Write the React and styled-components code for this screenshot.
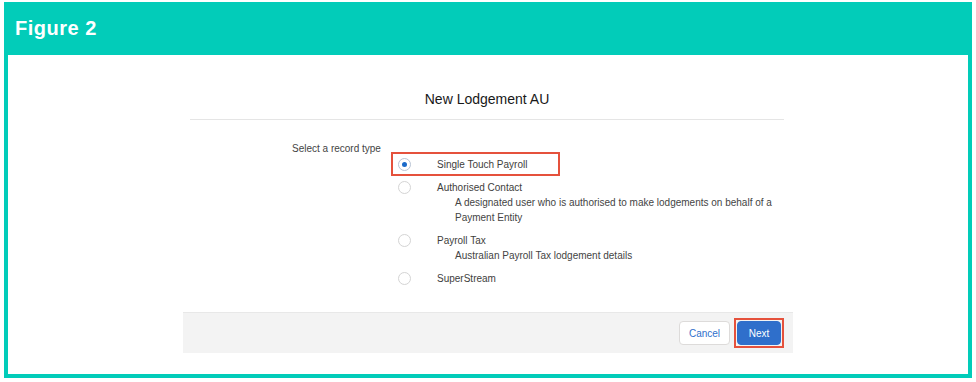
import React from "react";
import styled, { createGlobalStyle } from "styled-components";

const GlobalStyle = createGlobalStyle`
  html, body {
    margin: 0;
    padding: 0;
    background: #ffffff;
  }
  body {
    font-family: "Liberation Sans", Arial, sans-serif;
  }
`;

const Page = styled.div`
  width: 976px;
  height: 382px;
  box-sizing: border-box;
  padding: 2px 4px 4px 4px;
  background: #ffffff;
`;

const Frame = styled.div`
  height: 100%;
  box-sizing: border-box;
  background: #02ccb9;
  padding: 0 4px 4px 4px;
  display: flex;
  flex-direction: column;
`;

const Header = styled.div`
  height: 53px;
  display: flex;
  align-items: center;
  padding-left: 7px;
  color: #ffffff;
  font-family: "Liberation Sans", Arial, sans-serif;
  font-weight: 700;
  font-size: 20px;
  letter-spacing: 0.5px;
`;

const Content = styled.div`
  flex: 1;
  background: #ffffff;
  display: flex;
  justify-content: center;
`;

const Modal = styled.div`
  width: 610px;
  display: flex;
  flex-direction: column;
`;

const Title = styled.h2`
  margin: 0 9px 0 7px;
  padding-top: 34px;
  padding-bottom: 10px;
  border-bottom: 1px solid #e5e5e5;
  text-align: center;
  font-size: 14px;
  line-height: 20px;
  font-weight: 400;
  color: #181818;
`;

const Body = styled.div`
  flex: 1;
  display: flex;
  padding: 21px 0 0 109px;
  font-size: 10px;
  line-height: 15px;
  color: #444444;
`;

const FieldLabel = styled.div`
  width: 106px;
`;

const Options = styled.div`
  display: flex;
  flex-direction: column;
  gap: 8px;
  padding-top: 16px;
`;

const Option = styled.div`
  position: relative;
  display: grid;
  grid-template-columns: 13px 1fr;
  column-gap: 26px;
  align-items: start;

  ${(p) =>
    p.$marked &&
    `
    &::after {
      content: "";
      position: absolute;
      left: -7px;
      top: -5px;
      width: 165px;
      height: 20px;
      border: 2px solid #e5513c;
    }
  `}
`;

const Radio = styled.span`
  width: 13px;
  height: 13px;
  margin-top: 1px;
  box-sizing: border-box;
  border-radius: 50%;
  border: 1px solid ${(p) => (p.$checked ? "#b9c4d4" : "#d4d4d4")};
  background: #ffffff;
  display: flex;
  align-items: center;
  justify-content: center;

  &::before {
    content: "";
    width: 5px;
    height: 5px;
    border-radius: 50%;
    background: ${(p) => (p.$checked ? "#1b6ac9" : "transparent")};
  }
`;

const OptionName = styled.div`
  color: #3e3e3c;
`;

const OptionDesc = styled.div`
  padding-left: 18px;
  max-width: 320px;
`;

const Footer = styled.div`
  height: 40px;
  margin-bottom: 21px;
  border-top: 1px solid #e8e8e8;
  background: #f3f3f3;
  display: flex;
  align-items: center;
  justify-content: flex-end;
  gap: 4px;
  padding-right: 9px;
`;

const Button = styled.button`
  height: 24px;
  box-sizing: border-box;
  padding: 0 ${(p) => (p.$primary ? "10px" : "8px")};
  min-width: ${(p) => (p.$primary ? "44px" : "51px")};
  border-radius: 4px;
  border: 1px solid ${(p) => (p.$primary ? "#2f6fcb" : "#dddbda")};
  background: ${(p) => (p.$primary ? "#2f6fcb" : "#ffffff")};
  color: ${(p) => (p.$primary ? "#ffffff" : "#2f6fcb")};
  font-family: "Liberation Sans", Arial, sans-serif;
  font-size: 10px;
  cursor: pointer;
`;

const Marker = styled.span`
  display: flex;
  padding: 1px;
  border: 2px solid #e5513c;
`;

const options = [
  { name: "Single Touch Payroll", checked: true },
  {
    name: "Authorised Contact",
    desc: "A designated user who is authorised to make lodgements on behalf of a Payment Entity",
  },
  { name: "Payroll Tax", desc: "Australian Payroll Tax lodgement details" },
  { name: "SuperStream" },
];

export default function App() {
  return (
    <>
      <GlobalStyle />
      <Page>
        <Frame>
          <Header>Figure 2</Header>
          <Content>
            <Modal>
              <Title>New Lodgement AU</Title>
              <Body>
                <FieldLabel>Select a record type</FieldLabel>
                <Options>
                  {options.map((o) => (
                    <Option key={o.name} $marked={o.checked}>
                      <Radio $checked={o.checked} />
                      <div>
                        <OptionName>{o.name}</OptionName>
                        {o.desc && <OptionDesc>{o.desc}</OptionDesc>}
                      </div>
                    </Option>
                  ))}
                </Options>
              </Body>
              <Footer>
                <Button>Cancel</Button>
                <Marker>
                  <Button $primary>Next</Button>
                </Marker>
              </Footer>
            </Modal>
          </Content>
        </Frame>
      </Page>
    </>
  );
}
